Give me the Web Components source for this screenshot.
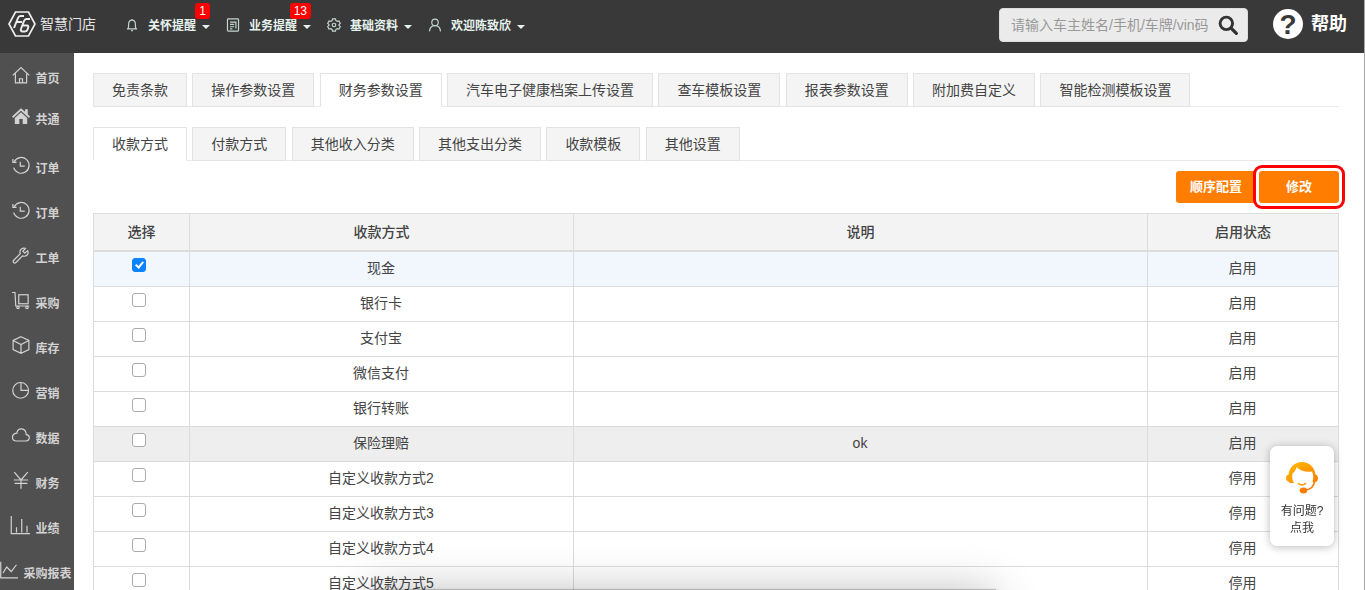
<!DOCTYPE html>
<html lang="zh-CN">
<head>
<meta charset="utf-8">
<title>智慧门店 - 财务参数设置</title>
<style>
body{margin:0;font-family:"Liberation Sans","Noto Sans CJK SC",sans-serif;font-size:14px;line-height:20px;color:#444;background:#fff}
</style>
</head>
<body>
<store-app></store-app>
<script>
const ICONS = {
  bell:'<path d="M12 3.500v-2M5 18.500c1-1 1.200-2 1.200-8C6.200 6 8.500 3.500 12 3.500s5.800 2.500 5.800 7c0 6 .2 7 1.200 8zM3.500 18.500h17M10.500 21.500h3"/>',
  doc:'<rect x="2.500" y="1.500" width="19" height="21" rx="1.500"/><path d="M7 7h10v11M7 11h7M7 15h7M7 18.500h4"/>',
  gear:'<path d="M9.500 1.500h5l.8 3 2.200 1.300 3-.9 2.300 4.200-2.200 2.200v1.400l2.200 2.200-2.300 4.200-3-.9-2.200 1.300-.8 3h-5l-.8-3-2.200-1.300-3 .9-2.300-4.200 2.200-2.200v-1.400L1.200 9.100l2.300-4.200 3 .9 2.200-1.300z"/><circle cx="12" cy="12" r="3"/>',
  user:'<circle cx="12" cy="7.500" r="5.500"/><path d="M2.500 23c.5-6 4-10 9.500-10s9 4 9.500 10"/>',
  home:'<path d="M1 12.500 12 2l11 10.500M4.500 10V22.500h15V10M10 22v-5h4v5"/>',
  house:'<path fill="currentColor" stroke="none" d="M12 1.500 0 12.500l1.500 2L12 5l10.500 9.500 1.500-2-3-2.700V3h-3.500v3.300zM12 7l-8.300 7.500V22.500h6.100v-6.500h4.400v6.500h6.100v-8z"/>',
  clock:'<path d="M3 7.500A10.500 10.500 0 1 1 2.200 15.500M1.200 4v4.500H6M11 7.500v6h6"/>',
  wrench:'<path d="M20.800 6.200 17 9.500 14.500 7l3.300-3.800C14.500 1.800 10.500 4 10.500 8c0 .8.200 1.600.5 2.300L2.300 19c-2 2.200.8 5 3 3L14 13.200c5 1.800 9.200-2.800 6.800-7z"/>',
  cart:'<path d="M0 2h4L5 20h18"/><rect x="9" y="5" width="12.500" height="12"/><circle cx="8" cy="22" r="1.600"/><circle cx="20" cy="22" r="1.600"/>',
  box:'<path d="m12 1 10.500 5v12L12 23 1.500 18V6zM1.500 6 12 11.500 22.500 6M12 11.500V23"/>',
  pie:'<circle cx="11.500" cy="12.500" r="10.500"/><path d="M12 2v10.500h10"/>',
  cloud:'<path d="M6 20h12.500c6-.5 6-8 .5-8.500C18.500 2 7 1.500 6.500 9.500-1.500 10.500-1 19.500 6 20z"/>',
  yuan:'<path d="M3 1.500 12 12l9-10.500M12 12v11.500M2.500 12h19M3.500 16.500h17"/>',
  bars:'<path d="M-1 0v23.500h25M6 22v-7M13 22V4M20 22v-9"/>',
  trend:'<path d="M1 1v21.500h23M4 16l5-8 6 6 7-9"/>',
  search:'<circle cx="10" cy="10" r="7.500" stroke-width="3.500"/><path d="m16 16 6 6" stroke-width="4" stroke-linecap="round"/>'
};

class BaseElement extends HTMLElement {
  connectedCallback(){
    if(this.shadowRoot) return;
    this.attachShadow({mode:'open'}).innerHTML = this.render();
  }
}

class UiIcon extends BaseElement {
  render(){
    return `<style>:host{display:block;flex:none;width:var(--icon,14px);height:var(--icon,14px)}svg{display:block;width:100%;height:100%;overflow:visible}</style>
    <svg viewBox="0 0 24 24" fill="none" stroke="currentColor" stroke-width="${this.getAttribute('weight')||2}" aria-hidden="true">${ICONS[this.getAttribute('name')]}</svg>`;
  }
}
customElements.define('ui-icon',UiIcon);

class TopMenu extends BaseElement {
  render(){
    const badge=this.getAttribute('badge');
    return `<style>
      :host{display:block;position:relative}
      button{display:flex;align-items:center;height:20px;padding:0;border:0;background:none;color:#e6f2ee;font:bold 12px/20px "Liberation Sans","Noto Sans CJK SC",sans-serif;cursor:pointer}
      ui-icon{color:#c3d6d0;margin:0 9px 2px 0}
      i{margin:2px 0 0 6px;border:4px solid transparent;border-top-color:currentColor;border-bottom:0}
      b{position:absolute;right:0;bottom:17px;box-sizing:border-box;min-width:15px;padding:0 4px;border-radius:3px;background:#f00;color:#fff;font-weight:400;font-size:12px;line-height:16px;text-align:center}
    </style>
    <button type="button"><ui-icon name="${this.getAttribute('icon')}"></ui-icon><slot></slot><i></i></button>${badge?`<b>${badge}</b>`:''}`;
  }
}
customElements.define('top-menu',TopMenu);

class TopBar extends BaseElement {
  render(){
    return `<style>
      :host{display:flex;align-items:center;box-sizing:border-box;height:53px;padding:0 17px 3px 8px;background:#393939;color:#fff}
      .logo{display:flex;align-items:center;gap:4px;color:#e4e4e4;text-decoration:none;font-size:14px;margin-bottom:2px}
      .logo svg{display:block;width:28px;height:26px}
      nav{display:flex;gap:16px;margin:2px 0 0 29px}
      form{display:flex;align-items:center;box-sizing:border-box;width:249px;height:34px;margin-left:auto;padding:0 9px 0 11px;border:1px solid #ddd;border-radius:4px;background:#ebebeb}
      input{flex:1;min-width:0;padding:0;border:0;outline:0;background:none;font:14px/20px "Liberation Sans","Noto Sans CJK SC",sans-serif;color:#444}
      input::placeholder{color:#999;opacity:1}
      form button{padding:0;border:0;background:none;color:#333;--icon:20px}
      .help{display:flex;align-items:center;gap:8px;margin:0 0 3px 25px;color:#fff;text-decoration:none;font-weight:700;font-size:18px}
      .help i{width:30px;height:30px;border-radius:50%;background:#fff;color:#393939;font:bold 28px/31px "Liberation Sans",sans-serif;text-align:center}
    </style>
    <a class="logo" href="#"><svg viewBox="0 0 28 26" fill="none" stroke="#eee" stroke-width="1.700" aria-hidden="true"><path d="M7.500 1h13L27 13l-6.500 12h-13L1 13z"/><path stroke-width="2" d="M16 5h-3.500c-1.500 0-2 .7-2.500 2L6 17M9 11h5M22 8h-3.500c-1.500 0-2 .7-2.500 2l-3 8c-.5 1.500 0 2.500 1.500 2.500H17c1.200 0 2-.5 2.400-1.700l.8-2.300c.4-1.200 0-2-1.200-2h-4"/></svg>智慧门店</a>
    <nav>
      <top-menu icon="bell" badge="1">关怀提醒</top-menu>
      <top-menu icon="doc" badge="13">业务提醒</top-menu>
      <top-menu icon="gear">基础资料</top-menu>
      <top-menu icon="user">欢迎陈致欣</top-menu>
    </nav>
    <form><input type="text" aria-label="搜索车主" placeholder="请输入车主姓名/手机/车牌/vin码"><button type="button" aria-label="搜索"><ui-icon name="search"></ui-icon></button></form>
    <a class="help" href="#"><i>?</i>帮助</a>`;
  }
}
customElements.define('top-bar',TopBar);

class SideItem extends BaseElement {
  render(){
    return `<style>
      :host{display:block;height:45px}
      :host([compact]){height:37px;margin-bottom:8px}
      a{display:flex;align-items:center;justify-content:center;gap:5px;height:100%;box-sizing:border-box;padding-right:2px;color:#d2d2d2;text-decoration:none;font-weight:700;font-size:12px;--icon:18px;white-space:nowrap}
      span{padding-top:6px}
      ui-icon{margin-bottom:2px}
    </style><a href="#"><ui-icon name="${this.getAttribute('icon')}" weight="1.600"></ui-icon><span><slot></slot></span></a>`;
  }
}
customElements.define('side-item',SideItem);

class SideBar extends BaseElement {
  render(){
    return `<style>:host{display:block;flex:none;width:74px;background:#505050;overflow:hidden}</style>
    <nav>
      <side-item icon="home">首页</side-item><side-item icon="house" compact>共通</side-item>
      <side-item icon="clock">订单</side-item><side-item icon="clock">订单</side-item>
      <side-item icon="wrench">工单</side-item><side-item icon="cart">采购</side-item>
      <side-item icon="box">库存</side-item><side-item icon="pie">营销</side-item>
      <side-item icon="cloud">数据</side-item><side-item icon="yuan">财务</side-item>
      <side-item icon="bars">业绩</side-item><side-item icon="trend">采购报表</side-item>
    </nav>`;
  }
}
customElements.define('side-bar',SideBar);

class TabStrip extends BaseElement {
  render(){
    const active=this.getAttribute('active');
    const tabs=this.getAttribute('tabs').split(',').map(t=>`<button type="button" role="tab" aria-selected="${t===active}">${t}</button>`).join(' ');
    return `<style>
      :host{display:block}
      div{font-size:12px;line-height:0;box-shadow:inset 0 -1px #e9e9e9;white-space:nowrap}
      button{box-sizing:border-box;height:34px;margin:0 2px 0 0;padding:0 18px;border:1px solid #e3e3e3;border-radius:0;background:#f4f4f4;color:#444;font:14px/32px "Liberation Sans","Noto Sans CJK SC",sans-serif;vertical-align:top}
      [aria-selected=true]{background:#fff;border-bottom-color:#fff}
    </style><div role="tablist">${tabs}</div>`;
  }
}
customElements.define('tab-strip',TabStrip);

class ActionButton extends BaseElement {
  render(){
    return `<style>
      :host{display:block}
      button{display:block;min-width:80px;height:32px;padding:0 13px;border:0;border-radius:3px;background:#ff7d00;color:#fff;font:bold 13px/32px "Liberation Sans","Noto Sans CJK SC",sans-serif}
      :host([marked]) button{box-shadow:0 0 0 3px #fff;outline:3px solid #fb0007;outline-offset:3px}
      :host([marked]){position:relative}
    </style><button type="button"><slot></slot></button>`;
  }
}
customElements.define('action-button',ActionButton);

const METHODS = [
  ['现金','','启用'],['银行卡','','启用'],['支付宝','','启用'],['微信支付','','启用'],['银行转账','','启用'],
  ['保险理赔','ok','启用'],['自定义收款方式2','','停用'],['自定义收款方式3','','停用'],['自定义收款方式4','','停用'],['自定义收款方式5','','停用']
];
class PaymentTable extends BaseElement {
  render(){
    const rows=METHODS.map(([name,note,state],i)=>`<tr class="${i===0?'picked':i===5?'hover':''}"><td><input type="checkbox" aria-label="${name}"${i===0?' checked':''}></td><td>${name}</td><td>${note}</td><td>${state}</td></tr>`).join('');
    return `<style>
      :host{display:block}
      table{width:100%;table-layout:fixed;border-collapse:separate;border-spacing:0;border:solid #dcdcdc;border-width:1px 0 0 1px}
      th,td{box-sizing:border-box;padding:0 1px 2px 0;border:solid #dcdcdc;border-width:0 1px 1px 0;text-align:center;font-size:14px;line-height:20px}
      th{height:38px;padding:0;background:#f3f3f3;border-bottom-width:2px;font-weight:500}
      td{height:35px}
      .picked td{background:#f1f7fc}
      .hover td{background:#eee}
      .c1{width:96px}.c2{width:384px}.c4{width:191px}
      input{display:block;appearance:none;box-sizing:border-box;width:14px;height:14px;margin:0 auto;border:1px solid #aaa;border-radius:3px;background:#fff;position:relative}
      td:first-child{padding:0 6px 8px 0}
      input:checked{border-color:#0a84ff;background:#0a84ff}
      input:checked::after{content:"";position:absolute;left:4px;top:1px;width:3px;height:6px;border:solid #fff;border-width:0 2px 2px 0;transform:rotate(40deg)}
    </style>
    <table><colgroup><col class="c1"><col class="c2"><col><col class="c4"></colgroup>
    <thead><tr><th>选择</th><th>收款方式</th><th>说明</th><th>启用状态</th></tr></thead><tbody>${rows}</tbody></table>`;
  }
}
customElements.define('payment-table',PaymentTable);

class HelpCard extends BaseElement {
  render(){
    return `<style>
      :host{display:block;position:fixed;right:31px;bottom:44px}
      button{display:flex;flex-direction:column;align-items:center;box-sizing:border-box;width:64px;height:100px;padding:15px 0 0;border:0;border-radius:7px;background:#fff;box-shadow:0 1px 8px rgba(0,0,0,.28);color:#333;font:12px/17px "Liberation Sans","Noto Sans CJK SC",sans-serif}
      svg{width:32px;height:34px;margin-bottom:8px}
    </style>
    <button type="button"><svg viewBox="0 0 32 34" fill="none" aria-hidden="true"><defs><linearGradient id="g" x1="0" y1="0" x2="1" y2="1"><stop stop-color="#ffbd00"/><stop offset="1" stop-color="#ff7a00"/></linearGradient></defs>
      <path fill="url(#g)" d="M2.500 13.500C3.500 6 9 1 16 1s12.500 5 13.500 12.500c1.800.5 2.500 2 2.500 3.700 0 2.300-1.300 4-3.500 4.300l-2-.5c1.200-4 1-7.500-.5-10.500-5 1-11 0-15.500-4.500-.5 3-2 5-4 6.500-.8 4 0 7 1.500 9.500-4.500.5-5.300-1-5.500-1.500C.8 19.800 0 18.700 0 17.200c0-1.700.7-3.200 2.500-3.700z"/>
      <path stroke="#ff9500" stroke-width="1.600" stroke-linecap="round" d="M12.500 22.500c2 1.800 5 1.800 7 0"/><path stroke="#ff7a00" stroke-width="1.600" d="M28.500 20c-.5 5-3.500 8.500-9 9"/><ellipse cx="17.500" cy="29.500" rx="3.800" ry="3" fill="#ff7a00"/></svg>
      <span>有问题?</span><span>点我</span></button>`;
  }
}
customElements.define('help-card',HelpCard);

class StoreApp extends BaseElement {
  render(){
    return `<style>
      :host{display:flex;flex-direction:column;height:100vh;overflow:hidden;box-sizing:border-box;border-right:1px solid #a8a8a8}
      .body{display:flex;flex:1;min-height:0}
      main{flex:1;min-width:0;overflow:auto;scrollbar-width:none;padding:20px 25px 0 19px}
      tab-strip{margin-bottom:20px}
      tab-strip+tab-strip{margin-bottom:10px}
      .actions{display:flex;justify-content:flex-end;gap:3px;margin-bottom:10px}
      .dock{position:fixed;left:370px;right:370px;top:100%;height:40px;box-shadow:0 0 44px rgba(0,0,0,.26),0 0 1px 1px rgba(0,0,0,.2)}
    </style>
    <top-bar></top-bar>
    <div class="body"><side-bar></side-bar>
      <main>
        <tab-strip active="财务参数设置" tabs="免责条款,操作参数设置,财务参数设置,汽车电子健康档案上传设置,查车模板设置,报表参数设置,附加费自定义,智能检测模板设置"></tab-strip>
        <tab-strip active="收款方式" tabs="收款方式,付款方式,其他收入分类,其他支出分类,收款模板,其他设置"></tab-strip>
        <div class="actions"><action-button>顺序配置</action-button><action-button marked>修改</action-button></div>
        <payment-table></payment-table>
      </main>
    </div>
    <div class="dock"></div>
    <help-card></help-card>`;
  }
}
customElements.define('store-app',StoreApp);
</script>
</body>
</html>
